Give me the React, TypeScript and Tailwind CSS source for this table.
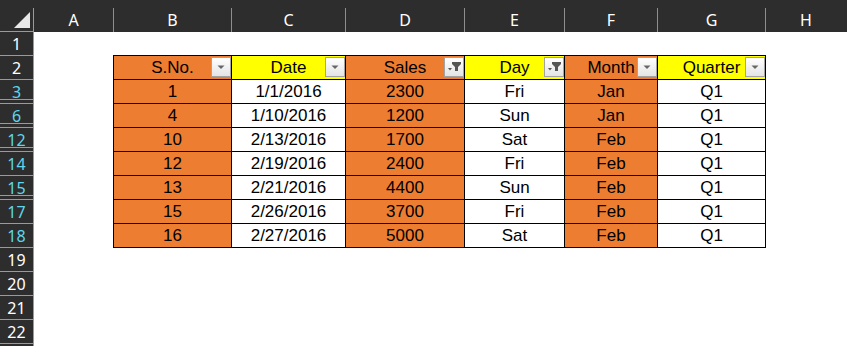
import React from 'react'

const letters = [
  { l: 'A', w: 'w-[80px]' },
  { l: 'B', w: 'w-[118px]' },
  { l: 'C', w: 'w-[114px]' },
  { l: 'D', w: 'w-[119px]' },
  { l: 'E', w: 'w-[100px]' },
  { l: 'F', w: 'w-[93px]' },
  { l: 'G', w: 'w-[108px]' },
]

const rowNums = [1, 2, 3, 6, 12, 14, 15, 17, 18, 19, 20, 21, 22]
const filtered = [3, 6, 12, 14, 15, 17, 18]
const gapAfter = [3, 6, 12, 15]

// column widths in the table (B carries the left border too)
const cols = [
  { w: 'w-[119px] border-l', orange: true },
  { w: 'w-[114px]', orange: false },
  { w: 'w-[119px]', orange: true },
  { w: 'w-[100px]', orange: false },
  { w: 'w-[93px]', orange: true },
  { w: 'w-[108px]', orange: false },
]

const headers: { label: string; filter: boolean }[] = [
  { label: 'S.No.', filter: false },
  { label: 'Date', filter: false },
  { label: 'Sales', filter: true },
  { label: 'Day', filter: true },
  { label: 'Month', filter: false },
  { label: 'Quarter', filter: false },
]

const data: (string | number)[][] = [
  [1, '1/1/2016', 2300, 'Fri', 'Jan', 'Q1'],
  [4, '1/10/2016', 1200, 'Sun', 'Jan', 'Q1'],
  [10, '2/13/2016', 1700, 'Sat', 'Feb', 'Q1'],
  [12, '2/19/2016', 2400, 'Fri', 'Feb', 'Q1'],
  [13, '2/21/2016', 4400, 'Sun', 'Feb', 'Q1'],
  [15, '2/26/2016', 3700, 'Fri', 'Feb', 'Q1'],
  [16, '2/27/2016', 5000, 'Sat', 'Feb', 'Q1'],
]

function FilterButton({ active }: { active: boolean }) {
  return (
    <div className="absolute right-0 top-[1px] w-[20px] h-[20px] border border-[#a3a3a3] bg-gradient-to-b from-[#ffffff] to-[#e4e4e4] flex items-center justify-center">
      {active ? (
        <svg width="18" height="18" viewBox="0 0 18 18">
          <path d="M7 4h9v2l-3 3v4h-3V9L7 6z" fill="#555" />
          <path d="M3 10h4l-2 2.5z" fill="#555" />
        </svg>
      ) : (
        <svg width="10" height="6" viewBox="0 0 10 6">
          <path d="M1.5 1.5h7L5 5z" fill="#666" />
        </svg>
      )}
    </div>
  )
}

export default function App() {
  return (
    <div className="w-[847px] h-[346px] overflow-hidden bg-white flex flex-col font-['Noto_Sans',sans-serif]">
      {/* column headers */}
      <div className="flex h-[32px] bg-[#2d2d2d] shrink-0">
        <div className="w-[34px] h-[32px] border-b border-[#9a9a9a] flex items-end shrink-0">
          <div className="w-full h-[23px] border-r border-[#9a9a9a] flex items-start">
            <svg width="33" height="23" viewBox="0 0 33 23">
              <path d="M30 4 L30 20 L14 20 Z" fill="#e8e8e8" />
            </svg>
          </div>
        </div>
        {letters.map((c) => (
          <div key={c.l} className={`${c.w} h-[32px] flex items-end shrink-0`}>
            <div className="w-full h-[24px] border-r border-[#8e8e8e] flex items-center justify-center text-white text-[16px] pb-[1px]">
              {c.l}
            </div>
          </div>
        ))}
        <div className="flex-1 h-[32px] flex items-end">
          <div className="w-[80px] h-[24px] flex items-center justify-center text-white text-[16px] pb-[1px]">H</div>
        </div>
      </div>

      <div className="flex flex-1">
        {/* row headers */}
        <div className="w-[34px] bg-[#2d2d2d] border-r border-[#9a9a9a] shrink-0">
          {rowNums.map((n) => (
            <div
              key={n}
              className={`h-[24px] border-b border-[#9a9a9a] flex items-center justify-center text-[16px] ${
                filtered.includes(n) ? 'text-[#5fd6ec]' : 'text-white'
              } ${gapAfter.includes(n) ? 'shadow-[inset_0_-3px_0_#2d2d2d,inset_0_-4px_0_#9a9a9a]' : ''}`}
            >
              {n}
            </div>
          ))}
        </div>

        {/* sheet */}
        <div className="flex-1 pt-[23px] pl-[79px] font-['Liberation_Sans',sans-serif] text-[17px] text-black">
          <div className="border-t border-black w-max">
            <div className="flex">
              {headers.map((h, i) => (
                <div
                  key={h.label}
                  className={`${cols[i].w} relative h-[24px] border-r border-b border-black flex items-center justify-center ${
                    cols[i].orange ? 'bg-[#ed7d31]' : 'bg-[#ffff00]'
                  }`}
                >
                  {h.label}
                  <FilterButton active={h.filter} />
                </div>
              ))}
            </div>
            {data.map((r, ri) => (
              <div key={ri} className="flex">
                {r.map((v, i) => (
                  <div
                    key={i}
                    className={`${cols[i].w} h-[24px] border-r border-b border-black flex items-center justify-center ${
                      cols[i].orange ? 'bg-[#ed7d31]' : 'bg-white'
                    }`}
                  >
                    {v}
                  </div>
                ))}
              </div>
            ))}
          </div>
        </div>
      </div>
    </div>
  )
}
